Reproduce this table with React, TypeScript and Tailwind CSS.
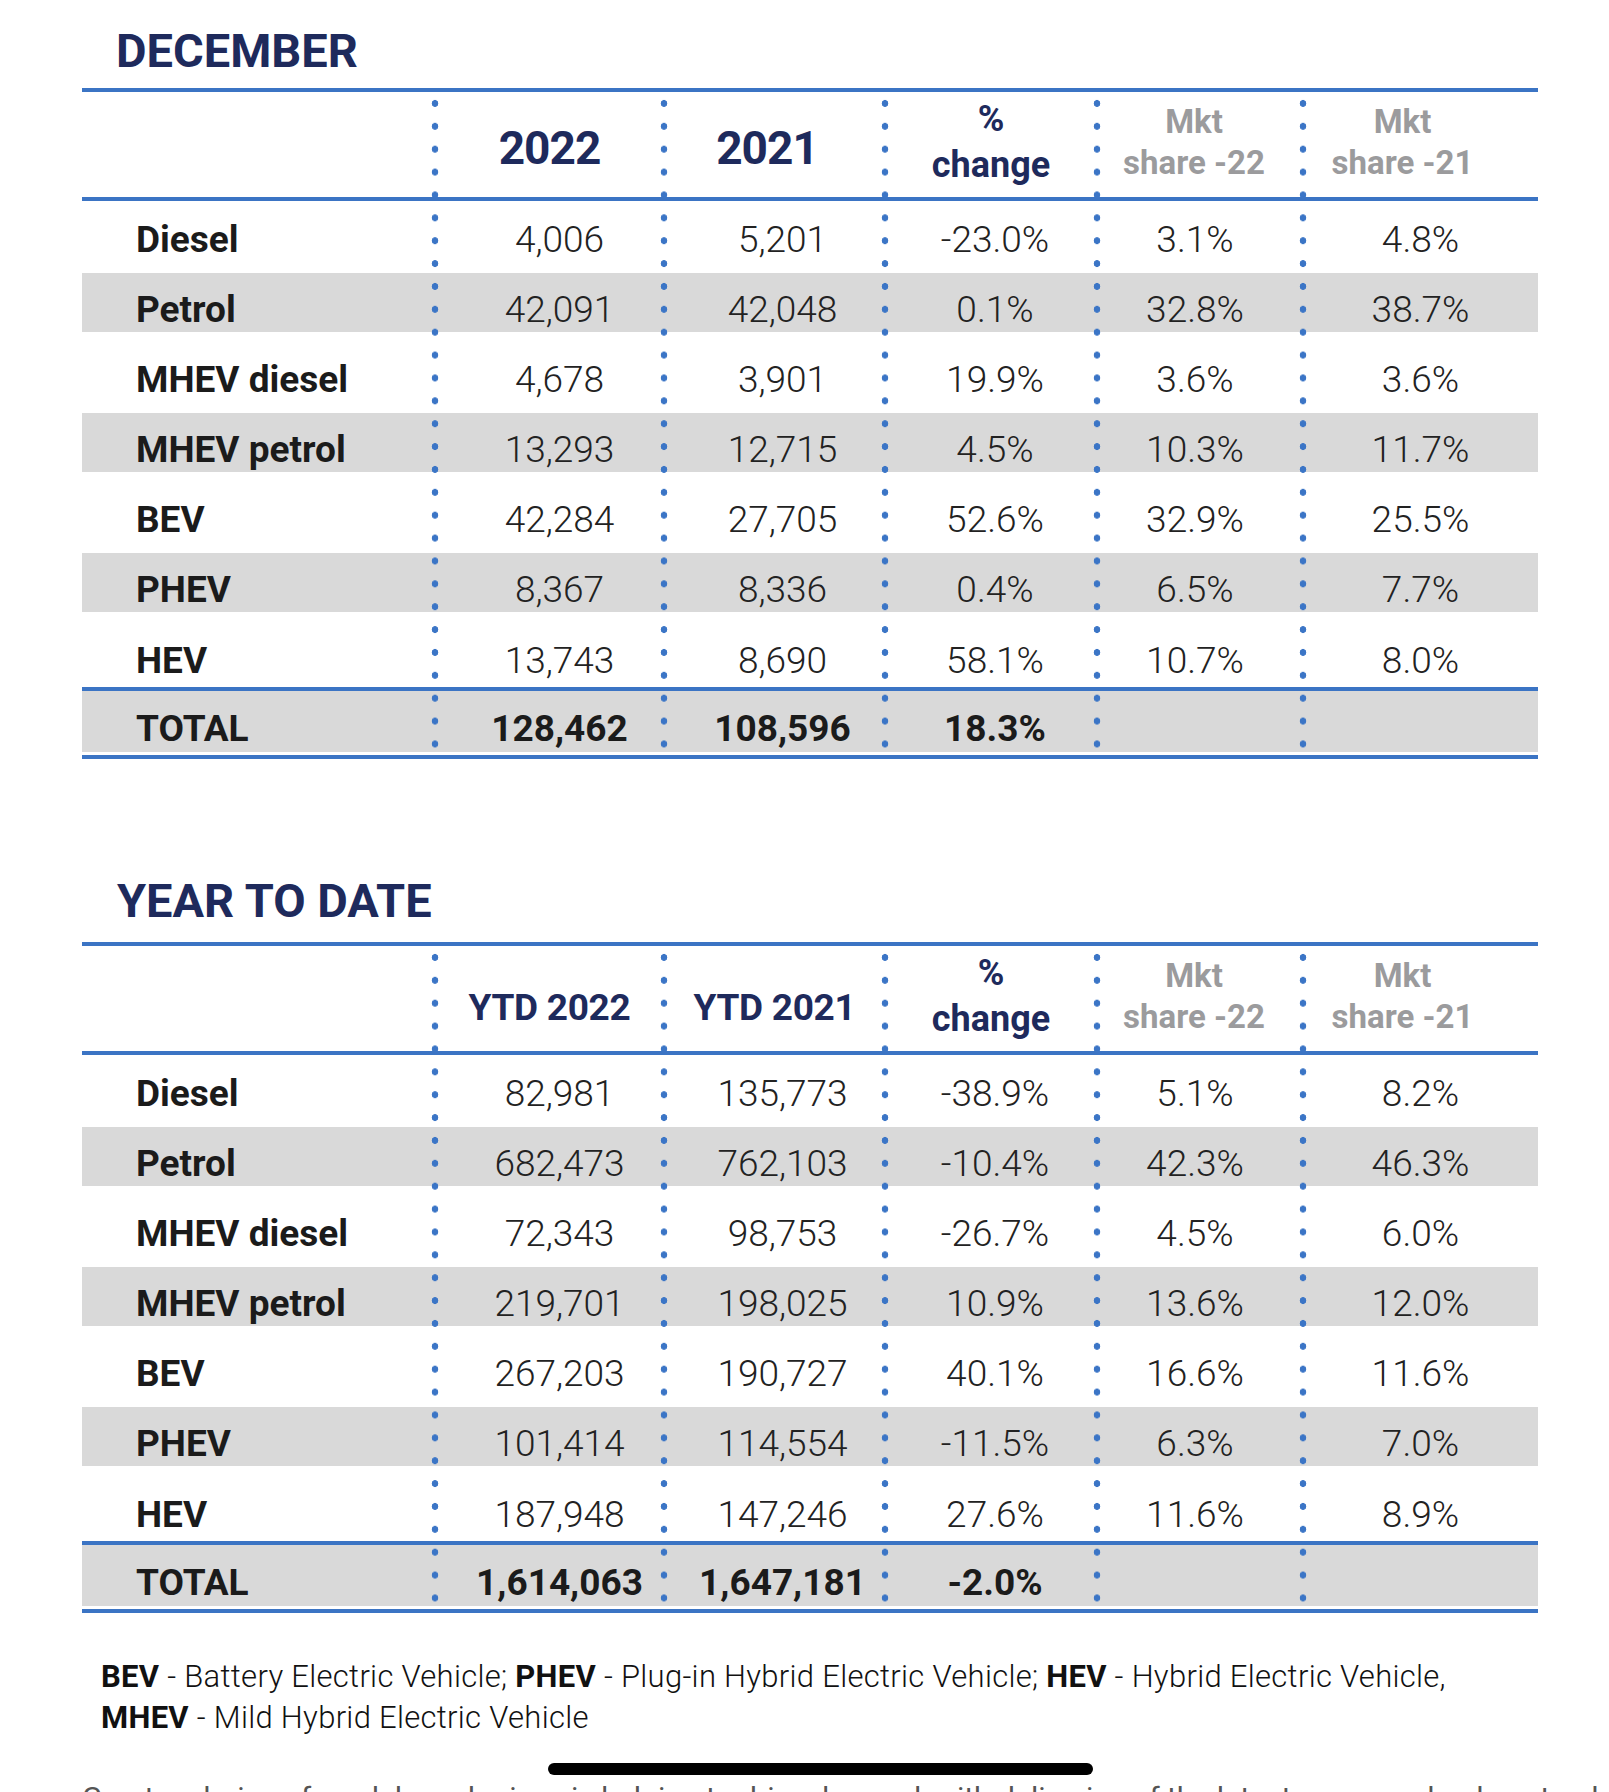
import React from "react";

type Row = { label: string; v: string[] };

const decemberRows: Row[] = [
	{ label: "Diesel", v: ["4,006", "5,201", "-23.0%", "3.1%", "4.8%"] },
	{ label: "Petrol", v: ["42,091", "42,048", "0.1%", "32.8%", "38.7%"] },
	{ label: "MHEV diesel", v: ["4,678", "3,901", "19.9%", "3.6%", "3.6%"] },
	{ label: "MHEV petrol", v: ["13,293", "12,715", "4.5%", "10.3%", "11.7%"] },
	{ label: "BEV", v: ["42,284", "27,705", "52.6%", "32.9%", "25.5%"] },
	{ label: "PHEV", v: ["8,367", "8,336", "0.4%", "6.5%", "7.7%"] },
	{ label: "HEV", v: ["13,743", "8,690", "58.1%", "10.7%", "8.0%"] },
];

const ytdRows: Row[] = [
	{ label: "Diesel", v: ["82,981", "135,773", "-38.9%", "5.1%", "8.2%"] },
	{ label: "Petrol", v: ["682,473", "762,103", "-10.4%", "42.3%", "46.3%"] },
	{ label: "MHEV diesel", v: ["72,343", "98,753", "-26.7%", "4.5%", "6.0%"] },
	{ label: "MHEV petrol", v: ["219,701", "198,025", "10.9%", "13.6%", "12.0%"] },
	{ label: "BEV", v: ["267,203", "190,727", "40.1%", "16.6%", "11.6%"] },
	{ label: "PHEV", v: ["101,414", "114,554", "-11.5%", "6.3%", "7.0%"] },
	{ label: "HEV", v: ["187,948", "147,246", "27.6%", "11.6%", "8.9%"] },
];

const cols = "grid grid-cols-[353px_229px_221px_212px_206px_235px]";

function DataTable({
	yearA,
	yearB,
	ytd,
	rows,
	total,
}: {
	yearA: string;
	yearB: string;
	ytd?: boolean;
	rows: Row[];
	total: string[];
}) {
	const yearCls = ytd
		? "text-[37px] pt-[18px] tracking-[-0.3px]"
		: "text-[46px] pt-[6px] tracking-[-1px]";
	return (
		<div className="relative w-[1456px]">
			<div className="h-[4px] bg-[#3b74c4]" />
			<div className={`${cols} h-[105px] items-center font-bold leading-none`}>
				<div />
				<div className={`text-center text-[#1e2a5c] ${yearCls}`}>{yearA}</div>
				<div className={`text-center text-[#1e2a5c] ${yearCls} ${ytd ? "" : "pr-[15px]"}`}>
					{yearB}
				</div>
				<div className="pb-[6px] text-center text-[36px] leading-[46px] text-[#1e2a5c]">
					%<br />
					change
				</div>
				<div className="pb-[6px] pr-[12px] text-center text-[33px] leading-[41px] text-[#9b9b9d]">
					Mkt
					<br />
					share -22
				</div>
				<div className="pb-[6px] pr-[36px] text-center text-[33px] leading-[41px] text-[#9b9b9d]">
					Mkt
					<br />
					share -21
				</div>
			</div>
			<div className="h-[4px] bg-[#3b74c4]" />
			<div className="h-[2px]" />
			{rows.map((r, i) => {
				const last = i === rows.length - 1;
				const grey = i % 2 === 1;
				return (
					<div
						key={r.label}
						className={`${cols} items-center text-[37px] ${last ? "h-[64px] pt-[10px]" : "h-[70px] pt-[4px]"} ${
							grey ? "bg-[linear-gradient(to_bottom,#d9d9d9_59px,transparent_59px)]" : ""
						}`}
					>
						<div className="pl-[54px] font-bold text-[#1b1b1b]">{r.label}</div>
						<div className="pl-[20px] text-center font-light text-[#222]">{r.v[0]}</div>
						<div className="pl-[16px] text-center font-light text-[#222]">{r.v[1]}</div>
						<div className="pl-[8px] text-center font-light text-[#222]">{r.v[2]}</div>
						<div className="pr-[10px] text-center font-light text-[#222]">{r.v[3]}</div>
						<div className="text-center font-light text-[#222]">{r.v[4]}</div>
					</div>
				);
			})}
			<div className="h-[4px] bg-[#3b74c4]" />
			<div className={`${cols} h-[61px] items-center bg-[#d9d9d9] pt-[10px] text-[37px] font-bold text-[#1b1b1b]`}>
				<div className="pl-[54px]">TOTAL</div>
				<div className="pl-[20px] text-center">{total[0]}</div>
				<div className="pl-[16px] text-center">{total[1]}</div>
				<div className="pl-[8px] text-center">{total[2]}</div>
				<div />
				<div />
			</div>
			<div className="h-[3px]" />
			<div className="h-[4px] bg-[#3b74c4]" />

			{/* dotted column separators */}
			<div className={`pointer-events-none absolute left-0 top-[4px] h-[663.5px] w-full ${cols}`}>
				<div />
				{[0, 1, 2, 3, 4].map((i) => (
					<div key={i} className="relative">
						<div className="absolute -left-[4px] top-0 h-full w-[8px] bg-[radial-gradient(circle,#3b75c6_3.1px,transparent_3.6px)] bg-[length:8px_22.88px] bg-repeat-y" />
					</div>
				))}
			</div>
		</div>
	);
}

export default function App() {
	return (
		<div className="h-[1792px] w-[1609px] overflow-hidden bg-white pl-[82px] font-[Roboto,sans-serif]">
			<section>
				<h2 className="h-[88px] pl-[34px] pt-[27px] text-[47px] font-bold leading-none text-[#1e2a5c]">
					DECEMBER
				</h2>
				<DataTable
					yearA="2022"
					yearB="2021"
					rows={decemberRows}
					total={["128,462", "108,596", "18.3%"]}
				/>
			</section>

			<section className="mt-[95px]">
				<h2 className="h-[88px] pl-[35px] pt-[23px] text-[47px] font-bold leading-none text-[#1e2a5c]">
					YEAR TO DATE
				</h2>
				<DataTable
					ytd
					yearA="YTD 2022"
					yearB="YTD 2021"
					rows={ytdRows}
					total={["1,614,063", "1,647,181", "-2.0%"]}
				/>
			</section>

			<p className="mt-[43px] whitespace-nowrap pl-[19px] text-[31px] font-light leading-[41px] tracking-[0.3px] text-[#111]">
				<b className="font-bold">BEV</b> - Battery Electric Vehicle; <b className="font-bold">PHEV</b> - Plug-in
				Hybrid Electric Vehicle; <b className="font-bold">HEV</b> - Hybrid Electric Vehicle,
				<br />
				<b className="font-bold">MHEV</b> - Mild Hybrid Electric Vehicle
			</p>

			<div className="ml-[466px] mt-[25px] h-[12px] w-[545px] rounded-full bg-black" />

			<p className="mt-[2px] whitespace-nowrap text-[30px] leading-[41px] text-[#555]">
				Greater choice of models and prices is helping to drive demand, with deliveries of the latest cars now back on track
			</p>
		</div>
	);
}
